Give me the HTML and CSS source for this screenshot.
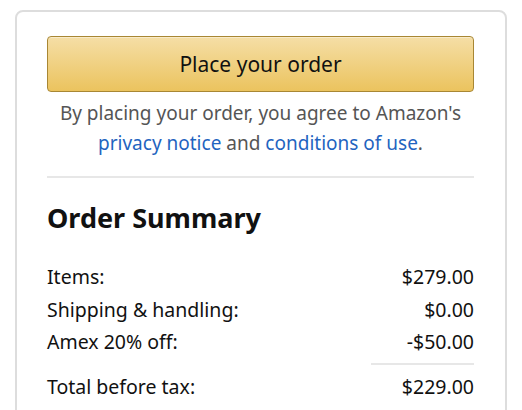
FILE: index.html
```html
<!DOCTYPE html>
<html>
<head>
<meta charset="utf-8">
<link rel="stylesheet" href="styles.css">
</head>
<body>
<div class="card">
  <button class="place-btn">Place your order</button>
  <p class="agree">By placing your order, you agree to Amazon's <a href="#">privacy notice</a> and <a href="#">conditions of use</a>.</p>
  <hr class="divider">
  <h2 class="title">Order Summary</h2>
  <div class="rows">
    <div class="row"><span>Items:</span><span>$279.00</span></div>
    <div class="row"><span>Shipping &amp; handling:</span><span>$0.00</span></div>
    <div class="row"><span>Amex 20% off:</span><span>-$50.00</span></div>
    <div class="subline"></div>
    <div class="row"><span>Total before tax:</span><span>$229.00</span></div>
    <div class="row"><span>Estimated tax to be collected:</span><span>$0.00</span></div>
  </div>
</div>
</body>
</html>
```
FILE: styles.css
```css
html, body {
  margin: 0;
  padding: 0;
  background: #fff;
  font-family: "Noto Sans", "Open Sans", sans-serif;
  color: #111;
  overflow: hidden;
}
.card {
  margin: 10px 15px 0 15px;
  border: 2px solid #ddd;
  border-radius: 8px;
  padding: 24px 31px 40px 30px;
  height: 500px;
}
.place-btn {
  display: block;
  width: 100%;
  height: 56px;
  border: 1px solid #a88734;
  border-radius: 4px;
  background: linear-gradient(to bottom, #f5dea6, #ebc35e);
  font-family: inherit;
  font-size: 21px;
  color: #111;
  box-shadow: inset 0 1px 0 rgba(255,255,255,0.4);
}
.agree {
  margin: 6px 0 0 0;
  text-align: center;
  font-size: 19px;
  line-height: 30px;
  color: #555;
}
.agree a {
  color: #1f64c0;
  text-decoration: none;
}
.divider {
  border: 0;
  border-top: 2px solid #e7e7e7;
  margin: 18px 0 0 0;
}
.title {
  margin: 22px 0 0 0;
  font-size: 27px;
  line-height: 36px;
  font-weight: 700;
}
.rows {
  margin-top: 25px;
}
.row {
  display: flex;
  justify-content: space-between;
  font-size: 19.5px;
  line-height: 32.5px;
}
.subline {
  width: 103px;
  margin: 4px 0 6px auto;
  border-top: 2px solid #e7e7e7;
}
```
